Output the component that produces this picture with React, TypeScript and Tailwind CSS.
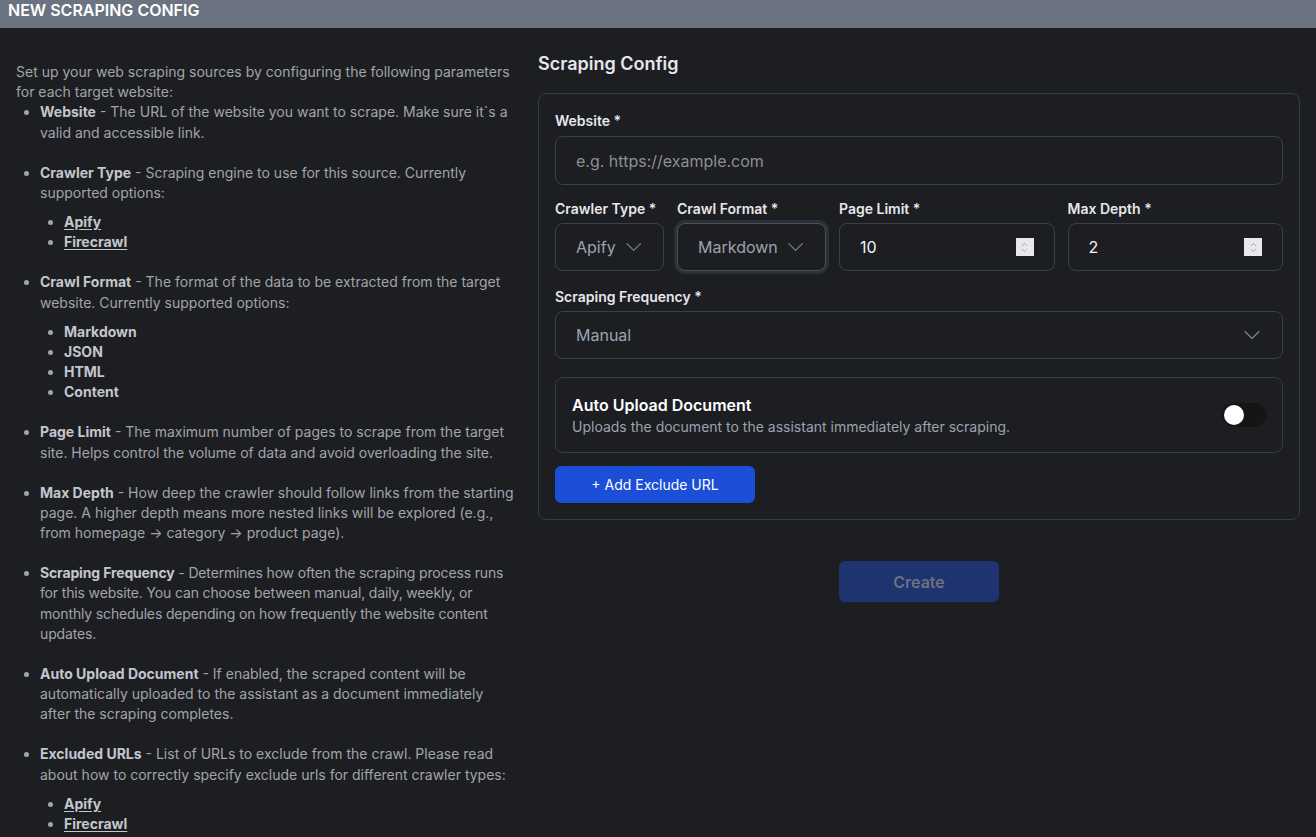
import { ChevronDown, ChevronUp } from 'lucide-react';

const labelCls = 'text-sm font-semibold leading-5 text-[#e5e7eb]';
const boxCls = 'rounded-lg border border-[#3b404a] bg-[#1d1e22]';

function Select({ value, className }: { value: string; className?: string }) {
  return (
    <div className={`flex h-12 items-center gap-1 pl-5 pr-4 text-base text-[#9ca3af] ${boxCls} ${className ?? ''}`}>
      <span>{value}</span>
      <ChevronDown className="h-7 w-7 text-[#80858e]" strokeWidth={1} />
    </div>
  );
}

function NumberField({ value }: { value: string }) {
  return (
    <div className={`flex h-12 flex-1 items-center justify-between pl-5 pr-5 text-base text-[#f3f4f6] ${boxCls}`}>
      <span>{value}</span>
      <span className="flex h-[18px] w-[18px] flex-col items-center justify-center bg-[#e9e9ed] text-[#8d8d95]">
        <ChevronUp className="-mb-[3px] h-[9px] w-[9px]" strokeWidth={2} />
        <ChevronDown className="h-[9px] w-[9px]" strokeWidth={2} />
      </span>
    </div>
  );
}

function Link({ children }: { children: string }) {
  return <span className="font-bold text-[#c3c6cc] underline underline-offset-2">{children}</span>;
}

function Item({
  title,
  children,
  links,
  className,
}: {
  title: string;
  children: string;
  links?: string[];
  className?: string;
}) {
  return (
    <li className={`mb-5 ${className ?? ''}`}>
      <b className="font-bold text-[#c3c6cc]">{title}</b> - {children}
      {links && (
        <ul className="mt-[9px] list-disc pl-6">
          {links.map((l) => (
            <li key={l}>
              {l === 'Apify' || l === 'Firecrawl' ? <Link>{l}</Link> : <b className="font-bold text-[#c3c6cc]">{l}</b>}
            </li>
          ))}
        </ul>
      )}
    </li>
  );
}

export default function App() {
  return (
    <div className="min-h-[837px] bg-[#1d1e22] font-['Inter','Noto_Sans',sans-serif]">
      <div className="h-7 bg-[#6b7280] px-2 text-base font-semibold leading-5 text-white">NEW SCRAPING CONFIG</div>

      <div className="grid grid-cols-[500px_1fr] gap-[22px] px-4">
        <div className="pt-[34px] text-sm leading-[20.17px] text-[#a1a4ab]">
          <p>Set up your web scraping sources by configuring the following parameters for each target website:</p>
          <ul className="list-disc pl-6">
            <Item title="Website">The URL of the website you want to scrape. Make sure it`s a valid and accessible link.</Item>
            <Item title="Crawler Type" links={['Apify', 'Firecrawl']}>
              Scraping engine to use for this source. Currently supported options:
            </Item>
            <Item title="Crawl Format" links={['Markdown', 'JSON', 'HTML', 'Content']}>
              The format of the data to be extracted from the target website. Currently supported options:
            </Item>
            <Item title="Page Limit">
              The maximum number of pages to scrape from the target site. Helps control the volume of data and avoid overloading the site.
            </Item>
            <Item title="Max Depth">
              How deep the crawler should follow links from the starting page. A higher depth means more nested links will be explored (e.g., from homepage → category → product page).
            </Item>
            <Item title="Scraping Frequency" className="tracking-[-0.15px]">
              Determines how often the scraping process runs for this website. You can choose between manual, daily, weekly, or monthly schedules depending on how frequently the website content updates.
            </Item>
            <Item title="Auto Upload Document">
              If enabled, the scraped content will be automatically uploaded to the assistant as a document immediately after the scraping completes.
            </Item>
            <Item title="Excluded URLs" links={['Apify', 'Firecrawl']}>
              List of URLs to exclude from the crawl. Please read about how to correctly specify exclude urls for different crawler types:
            </Item>
          </ul>
        </div>

        <div className="pt-[22px]">
          <h2 className="mb-[15px] text-lg font-semibold leading-7 text-[#e5e7eb]">Scraping Config</h2>

          <div className="flex flex-col rounded-lg border border-[#363a44] px-4 pt-[17px] pb-4">
            <label className={labelCls}>Website *</label>
            <div className={`mt-[5px] flex h-[49px] items-center pl-5 text-base text-[#8b8f98] ${boxCls}`}>
              e.g. https://example.com
            </div>

            <div className="mt-[14px] flex gap-[13px]">
              <div className="flex w-[109px] flex-col gap-1">
                <label className={labelCls}>Crawler Type *</label>
                <Select value="Apify" />
              </div>
              <div className="flex w-[149px] flex-col gap-1">
                <label className={labelCls}>Crawl Format *</label>
                <Select value="Markdown" className="border-[#4a505c] ring-[3px] ring-[#2c3038]" />
              </div>
              <div className="flex flex-1 flex-col gap-1">
                <label className={labelCls}>Page Limit *</label>
                <NumberField value="10" />
              </div>
              <div className="flex flex-1 flex-col gap-1">
                <label className={labelCls}>Max Depth *</label>
                <NumberField value="2" />
              </div>
            </div>

            <label className={`mt-4 ${labelCls}`}>Scraping Frequency *</label>
            <div className={`mt-1 flex h-12 items-center justify-between pl-5 pr-4 text-base text-[#9ca3af] ${boxCls}`}>
              <span>Manual</span>
              <ChevronDown className="h-7 w-7 text-[#80858e]" strokeWidth={1} />
            </div>

            <div className="mt-[18px] flex items-center justify-between rounded-lg border border-[#363a44] px-4 py-[15px]">
              <div>
                <div className="text-base font-semibold leading-6 text-white">Auto Upload Document</div>
                <div className="text-sm leading-5 text-[#9ca3af]">Uploads the document to the assistant immediately after scraping.</div>
              </div>
              <div className="flex h-6 w-11 items-center rounded-full bg-[#151515] px-0.5">
                <span className="h-5 w-5 rounded-full bg-white" />
              </div>
            </div>

            <button className="mt-[13px] h-[37px] w-[200px] rounded-md bg-[#1d4ed8] text-sm text-white">+ Add Exclude URL</button>
          </div>

          <div className="mt-[41px] flex justify-center">
            <button className="h-[41px] w-40 rounded-md bg-[#1f3370] text-base font-semibold text-[#6b7280]">Create</button>
          </div>
        </div>
      </div>
    </div>
  );
}
